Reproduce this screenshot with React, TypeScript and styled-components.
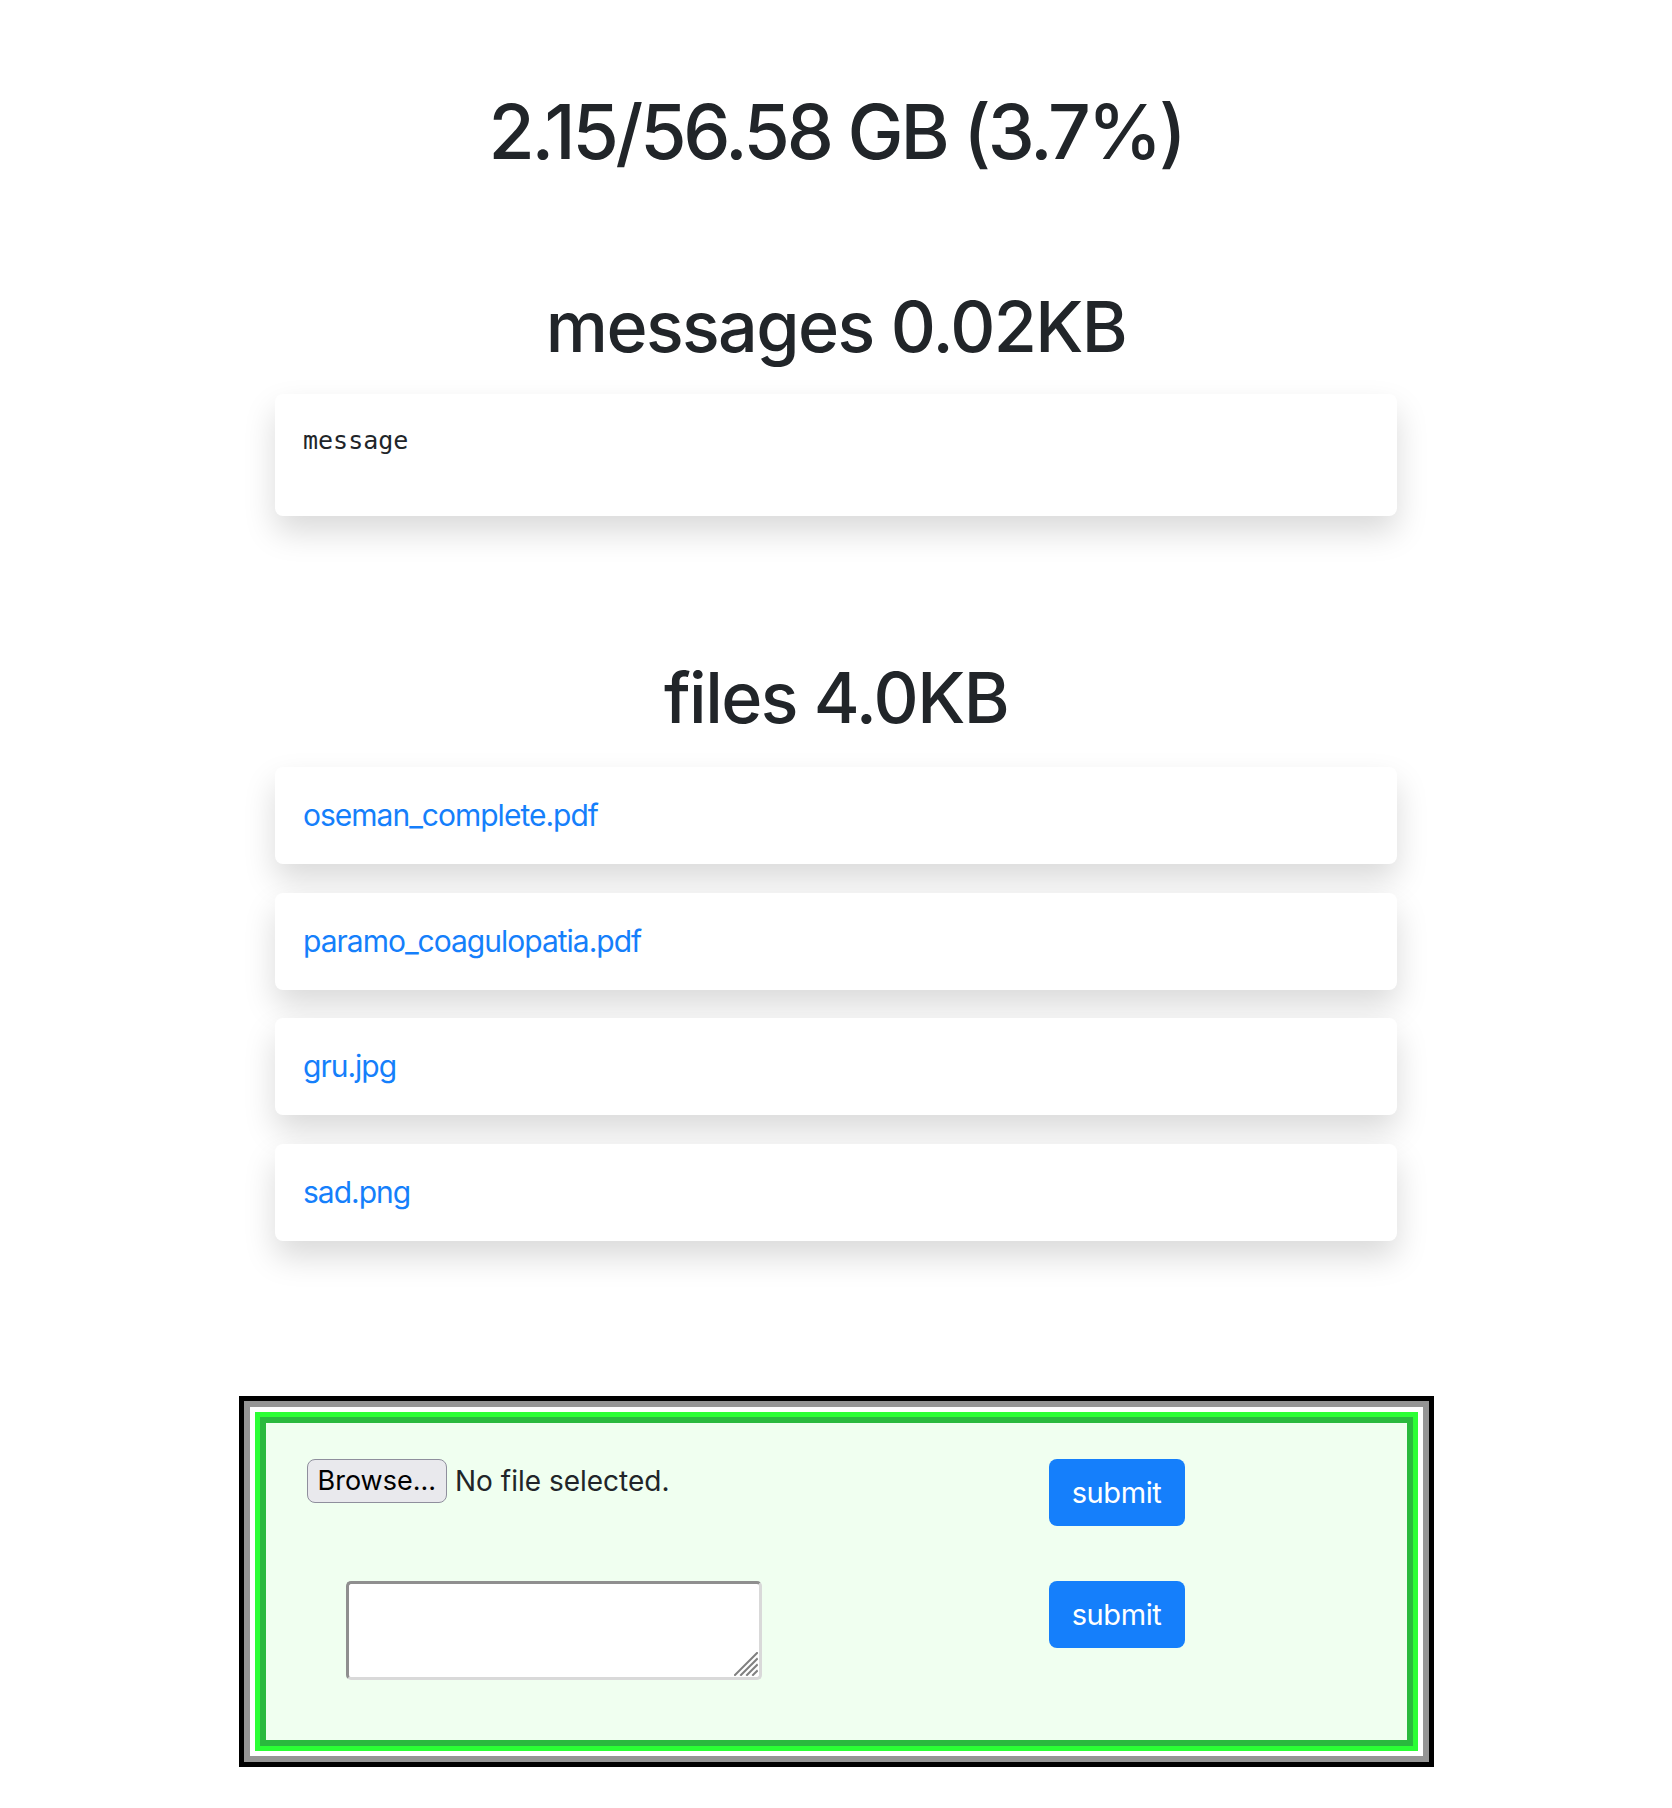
import React from "react";
import styled, { createGlobalStyle } from "styled-components";

const GlobalStyle = createGlobalStyle`
  html, body {
    margin: 0;
    padding: 0;
    background: #ffffff;
  }
  body {
    font-family: Inter, "Liberation Sans", Arial, sans-serif;
    color: #212529;
  }
`;

const Page = styled.main`
  display: flex;
  flex-direction: column;
  align-items: center;
  padding-top: 84px;
  padding-bottom: 40px;
`;

const Title = styled.h1`
  margin: 0;
  font-size: 75px;
  font-weight: 500;
  line-height: 96px;
  letter-spacing: -3.2px;
  color: #212529;
  text-align: center;
`;

const SectionHeading = styled.h2<{ $top: number }>`
  margin: ${(p) => p.$top}px 0 0;
  font-size: 70px;
  font-weight: 500;
  line-height: 84px;
  letter-spacing: -1.6px;
  color: #212529;
  text-align: center;
`;

const CardList = styled.div<{ $top: number }>`
  width: 1122px;
  margin-top: ${(p) => p.$top}px;
  display: flex;
  flex-direction: column;
  gap: 28.5px;
`;

const Card = styled.div`
  background: #ffffff;
  border-radius: 8px;
  box-shadow: 0 16px 32px rgba(0, 0, 0, 0.15);
  padding: 24px 28px 25px;
  height: 97px;
  box-sizing: border-box;
`;

const MessageCard = styled(Card)`
  height: 122px;
  padding: 28px 28px 56px;
`;

const MessageText = styled.pre`
  margin: 0;
  font-family: "DejaVu Sans Mono", "Liberation Mono", monospace;
  font-size: 25px;
  line-height: 37.5px;
  color: #212529;
`;

const FileLink = styled.a`
  font-size: 30px;
  line-height: 48px;
  letter-spacing: -1px;
  color: #157ffb;
  text-decoration: none;
`;

const UploadForm = styled.form`
  margin-top: 155px;
  width: 1195px;
  box-sizing: border-box;
  border: 5px solid #000000;
  background: #f0fff0;
  box-shadow:
    inset 0 0 0 6px #959595,
    inset 0 0 0 11px #ffffff,
    inset 0 0 0 16px #2bff35,
    inset 0 0 0 22px #2ab93e;
  padding: 58px 0 82px 63px;
  display: grid;
  grid-template-columns: 742px auto;
  row-gap: 55px;
  align-items: start;
`;

const FileRow = styled.div`
  display: flex;
  align-items: center;
  gap: 8px;
`;

const BrowseButton = styled.button`
  height: 44px;
  padding: 0 10px;
  font-family: Inter, "Liberation Sans", Arial, sans-serif;
  font-size: 27px;
  color: #000000;
  background: #e9e9ed;
  border: 1.5px solid #8f8f9d;
  border-radius: 8px;
  line-height: 1;
`;

const NoFile = styled.span`
  color: #212529;
  font-size: 28px;
  line-height: 44px;
`;

const SubmitButton = styled.button`
  width: 136px;
  height: 67px;
  border: none;
  border-radius: 8px;
  background: #157ffb;
  color: #ffffff;
  font-family: Inter, "Liberation Sans", Arial, sans-serif;
  font-size: 29px;
  letter-spacing: -0.4px;
  padding: 0;
`;

const TextareaWrap = styled.div`
  position: relative;
  margin-left: 39px;
  width: 416px;
  height: 99px;
`;

const Textarea = styled.textarea`
  display: block;
  width: 416px;
  height: 99px;
  box-sizing: border-box;
  resize: none;
  border: 3px solid;
  border-color: #8f8f8f #d9d9d9 #d9d9d9 #8f8f8f;
  border-radius: 5px;
  background: #ffffff;
  outline: none;
`;

const Grip = styled.svg`
  position: absolute;
  right: 4px;
  bottom: 4px;
  width: 24px;
  height: 24px;
  pointer-events: none;
`;

const files = [
  "oseman_complete.pdf",
  "paramo_coagulopatia.pdf",
  "gru.jpg",
  "sad.png",
];

export default function App() {
  return (
    <>
      <GlobalStyle />
      <Page>
        <Title>2.15/56.58 GB (3.7%)</Title>
        <SectionHeading $top={105}>messages 0.02KB</SectionHeading>
        <CardList $top={25}>
          <MessageCard>
            <MessageText>message</MessageText>
          </MessageCard>
        </CardList>
        <SectionHeading $top={140}>files 4.0KB</SectionHeading>
        <CardList $top={27}>
          {files.map((f) => (
            <Card key={f}>
              <FileLink href="#">{f}</FileLink>
            </Card>
          ))}
        </CardList>
        <UploadForm onSubmit={(e) => e.preventDefault()}>
          <FileRow>
            <BrowseButton type="button">Browse...</BrowseButton>
            <NoFile>No file selected.</NoFile>
          </FileRow>
          <SubmitButton type="submit">submit</SubmitButton>
          <TextareaWrap>
            <Textarea />
            <Grip viewBox="0 0 24 24">
              <g stroke="#808080" strokeWidth="2" strokeLinecap="square">
                <line x1="1" y1="23" x2="23" y2="1" />
                <line x1="7" y1="23" x2="23" y2="7" />
                <line x1="13" y1="23" x2="23" y2="13" />
                <line x1="19" y1="23" x2="23" y2="19" />
              </g>
            </Grip>
          </TextareaWrap>
          <SubmitButton type="submit">submit</SubmitButton>
        </UploadForm>
      </Page>
    </>
  );
}
